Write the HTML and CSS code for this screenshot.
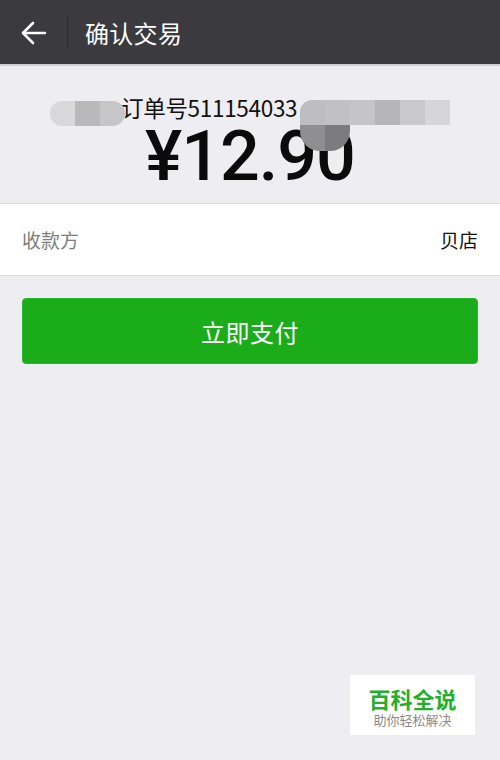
FILE: index.html
```html
<!DOCTYPE html>
<html lang="zh-CN">
<head>
  <meta charset="UTF-8">
  <meta name="viewport" content="width=device-width, initial-scale=1.0">
  <title>确认交易</title>
  <link rel="stylesheet" href="styles.css">
</head>
<body>
  <div class="topbar">
    <div class="back">
      <svg width="26" height="24" viewBox="0 0 26 24">
        <path d="M24 12H3M12 2L2 12l10 10" fill="none" stroke="#fff" stroke-width="2.6" stroke-linecap="round" stroke-linejoin="round"/>
      </svg>
    </div>
    <div class="sep"></div>
    <div class="title">确认交易</div>
  </div>

  <div class="summary">
    <div class="order">订单号511154033</div>
    <div class="amount">¥12.90</div>

    <div class="mosaic mosaic-left">
      <span class="m1"></span><span class="m2"></span><span class="m3"></span>
    </div>
    <div class="mosaic-right">
      <div class="mrow">
        <span class="r1"></span><span class="r2"></span><span class="r3"></span>
        <span class="r4"></span><span class="r5"></span><span class="r6"></span>
      </div>
      <div class="mrow low">
        <span class="d1"></span><span class="d2"></span>
      </div>
    </div>
  </div>

  <div class="row">
    <span class="label">收款方</span>
    <span class="value">贝店</span>
  </div>

  <div class="actions">
    <button class="pay">立即支付</button>
  </div>

  <div class="badge">
    <div class="badge-title">百科全说</div>
    <div class="badge-sub">助你轻松解决</div>
  </div>
</body>
</html>
```

FILE: styles.css
```css
body {
  margin: 0;
  background: #eeedf1;
  font-family: "Noto Sans CJK SC", "Noto Sans", sans-serif;
  height: 760px;
  position: relative;
  overflow: hidden;
}

.topbar {
  height: 66px;
  background: #3a3a3f;
  display: flex;
  align-items: center;
  border-bottom: 2px solid #cfcfd2;
  box-sizing: border-box;
}

.back {
  width: 67px;
  display: flex;
  padding-left: 21px;
  box-sizing: border-box;
  padding-top: 2px;
}

.sep {
  width: 1px;
  height: 32px;
  background: #2c2c30;
}

.title {
  color: #fff;
  font-size: 24px;
  margin-left: 17px;
  letter-spacing: 0.3px;
}

.summary {
  position: relative;
  height: 137px;
  border-bottom: 1px solid #dcdce0;
}

.order {
  padding-top: 29px;
  padding-left: 121px;
  font-size: 22.5px;
  line-height: 24px;
  color: #111;
  letter-spacing: -0.3px;
}

.amount {
  text-align: center;
  font-family: Roboto, "Liberation Sans", sans-serif;
  font-weight: 500;
  font-size: 70px;
  line-height: 56px;
  color: #0b0b0b;
  margin-top: 9px;
  letter-spacing: -1px;
}

.mosaic {
  position: absolute;
  display: flex;
}

.mosaic span,
.mrow span {
  width: 25px;
  height: 25px;
}

.mosaic-left {
  left: 50px;
  top: 35px;
  border-radius: 12px;
  overflow: hidden;
}

.m1 { background: #d9d9db; }
.m2 { background: #b9b9bb; }
.m3 { background: #c6c6c8; border-radius: 0 12px 12px 0; }

.mosaic-right {
  position: absolute;
  left: 300px;
  top: 34px;
}

.mrow {
  display: flex;
}

.r1 { background: #bebec0; border-top-left-radius: 12px; }
.r2 { background: #c1c1c3; }
.r3 { background: #c5c5c7; }
.r4 { background: #b6b6b8; }
.r5 { background: #c9c9cb; }
.r6 { background: #d6d6d8; }

.low span { height: 26px; }
.d1 { background: #8f8f91; border-bottom-left-radius: 20px; }
.d2 { background: #7c7c7e; border-bottom-right-radius: 20px; }

.row {
  height: 71px;
  background: #fff;
  border-bottom: 1px solid #dcdce0;
  display: flex;
  align-items: center;
  justify-content: space-between;
  padding: 0 22px;
  font-size: 19px;
}

.label {
  color: #7d7d7d;
}

.value {
  color: #111;
}

.actions {
  padding: 22px 22px 0;
}

.pay {
  width: 100%;
  height: 66px;
  border: 1px solid #2bb52a;
  border-radius: 4px;
  background: #1aad19;
  color: #fff;
  font-family: "Noto Sans CJK SC", sans-serif;
  font-size: 24px;
  letter-spacing: 0.5px;
}

.badge {
  position: absolute;
  left: 350px;
  top: 675px;
  width: 125px;
  height: 60px;
  background: #fff;
  text-align: center;
}

.badge-title {
  color: #22b02a;
  font-weight: bold;
  font-size: 22px;
  line-height: 22px;
  margin-top: 12px;
}

.badge-sub {
  color: #8a8a8a;
  font-size: 13px;
  line-height: 15px;
  margin-top: 3px;
}
```
